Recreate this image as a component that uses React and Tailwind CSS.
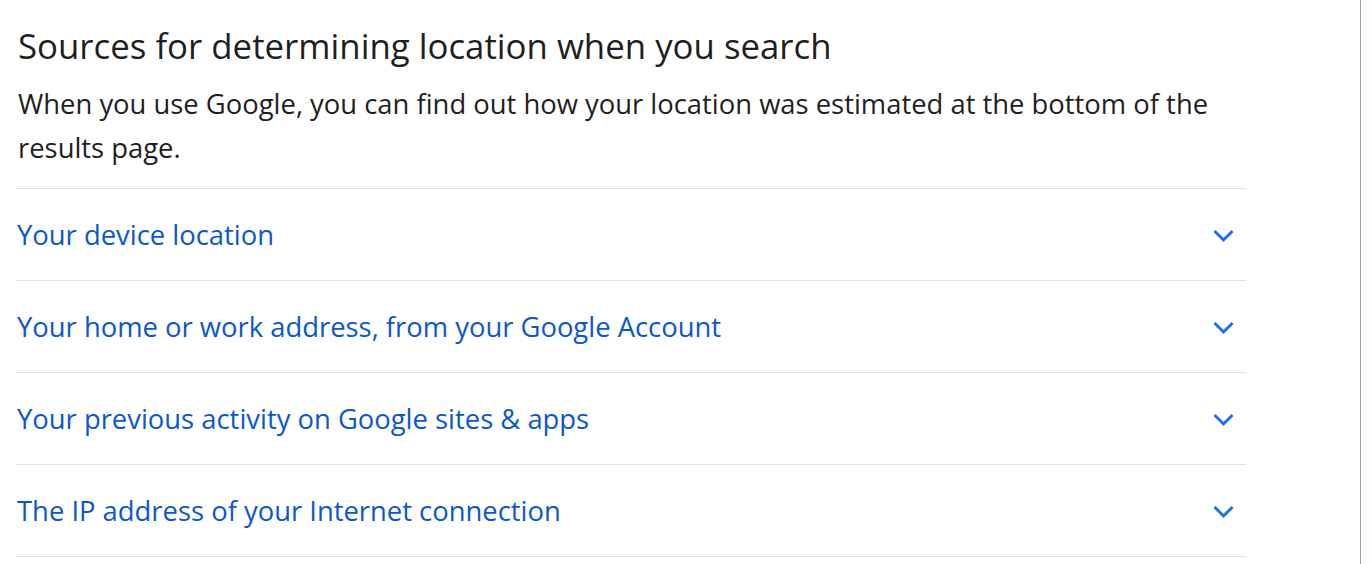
import React from "react";

const items = [
  "Your device location",
  "Your home or work address, from your Google Account",
  "Your previous activity on Google sites & apps",
  "The IP address of your Internet connection",
];

const Chevron = () => (
  <svg width="24" height="16" viewBox="0 0 24 16" className="mt-[3px] shrink-0">
    <polyline
      points="2.5,3 11.5,12 20.5,3"
      fill="none"
      stroke="#1a73e8"
      strokeWidth="3"
    />
  </svg>
);

export default function App() {
  return (
    <div
      className="flex h-[564px] w-full bg-white"
      style={{ fontFamily: '"Open Sans", "Roboto", Arial, sans-serif' }}
    >
      <div className="flex-1 pl-4">
        <div className="w-[1230px]">
          <h1 className="pt-[26px] pl-[2px] text-[34.8px] leading-[40px] font-medium text-[#1f1f1f]">
            Sources for determining location when you search
          </h1>
          <p className="mt-[16px] pl-[2px] text-[27.4px] leading-[44px] text-[#1f1f1f]">
            When you use Google, you can find out how your location was estimated at the bottom of the results page.
          </p>
          <div className="mt-[18px] border-t border-[#e0e0e0]">
            {items.map((t) => (
              <div
                key={t}
                className="flex h-[92px] items-center justify-between border-b border-[#e0e0e0] pl-[1px] pr-[10px]"
              >
                <span className="text-[27.4px] text-[#0b57d0]">{t}</span>
                <Chevron />
              </div>
            ))}
          </div>
        </div>
      </div>
      <div className="w-[12px] border-l border-[#a0a0a0] bg-[#fdfdfd]" />
    </div>
  );
}
